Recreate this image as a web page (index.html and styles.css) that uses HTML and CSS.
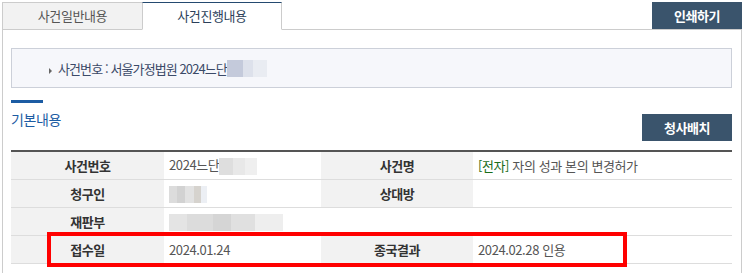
FILE: index.html
```html
<!DOCTYPE html>
<html lang="ko">
<head>
    <meta charset="UTF-8">
    <title>사건진행내용</title>
    <link rel="stylesheet" href="styles.css">
</head>
<body>
    <div class="topbar">
        <div class="tabs">
            <div class="tab">사건일반내용</div>
            <div class="tab active">사건진행내용</div>
        </div>
        <button class="btn print">인쇄하기</button>
    </div>

    <div class="content">
        <div class="case-box">
            <span class="bullet"></span>
            <span>사건번호 : 서울가정법원 2024느단</span><span class="blur blur-blue"></span>
        </div>

        <div class="section-head">
            <h3 class="section-title">기본내용</h3>
            <button class="btn small">청사배치</button>
        </div>

        <div class="table-wrap">
            <table class="info">
                <colgroup>
                    <col class="c-th">
                    <col class="c-td">
                    <col class="c-th2">
                    <col>
                </colgroup>
                <tr>
                    <th>사건번호</th>
                    <td>2024느단<span class="blur blur-a"></span></td>
                    <th>사건명</th>
                    <td><span class="tag">[전자]</span> 자의 성과 본의 변경허가</td>
                </tr>
                <tr>
                    <th>청구인</th>
                    <td><span class="blur blur-b"></span></td>
                    <th>상대방</th>
                    <td></td>
                </tr>
                <tr>
                    <th>재판부</th>
                    <td colspan="3"><span class="blur blur-c"></span></td>
                </tr>
                <tr>
                    <th>접수일</th>
                    <td>2024.01.24</td>
                    <th>종국결과</th>
                    <td>2024.02.28 인용</td>
                </tr>
            </table>
            <div class="mark"></div>
        </div>
    </div>
</body>
</html>
```

FILE: styles.css
```css
* {
    box-sizing: border-box;
    margin: 0;
    padding: 0;
}
body {
    font-family: "Noto Sans CJK KR", "Noto Sans", sans-serif;
    font-size: 12px;
    color: #555;
    background: #fff;
    padding: 2px 3px 0 2px;
    letter-spacing: -0.4px;
}
.topbar {
    display: flex;
    justify-content: space-between;
    align-items: flex-start;
}
.tabs {
    display: flex;
}
.tab {
    width: 140px;
    height: 28px;
    line-height: 26px;
    text-align: center;
    font-size: 13px;
    color: #555;
    background: #f2f2f2;
    border: 1px solid #ccc;
    border-right: none;
}
.tab.active {
    background: #fff;
    color: #2b3f5a;
    border-top: 1px solid #244a70;
    border-right: 1px solid #ccc;
    border-bottom: 1px solid #fff;
}
.btn {
    font-family: inherit;
    letter-spacing: -0.4px;
    background: #3a546c;
    color: #fff;
    border: none;
    font-size: 13px;
    font-weight: bold;
    width: 90px;
    height: 27px;
}
.content {
    border: 1px solid #ccc;
    margin-top: -1px;
    padding: 18px 9px 20px 8px;
}
.case-box {
    height: 40px;
    background: #f6f7fb;
    border: 1px solid #ccd0d9;
    display: flex;
    align-items: center;
    padding-left: 37px;
    font-size: 13px;
    letter-spacing: -0.9px;
    color: #3b4a68;
}
.bullet {
    width: 0;
    height: 0;
    border-left: 3px solid #666;
    border-top: 3px solid transparent;
    border-bottom: 3px solid transparent;
    margin: 6px 6px 0 0;
}
.blur {
    display: inline-block;
    height: 17px;
    vertical-align: middle;
}
.blur-blue {
    width: 40px;
    background: linear-gradient(to right, #c4cadb 0 16px, #dde1eb 16px 26px, #e9ecf2 26px);
}
.blur-a {
    width: 38px;
    background: linear-gradient(to right, #dedede 0 14px, #e8e8e8 14px 26px, #efefef 26px);
}
.blur-b {
    width: 38px;
    background: linear-gradient(to right, #dcdcdc 0 8px, #d2d2d2 8px 16px, #e2e2e2 16px 25px, #d6d3ce 25px 32px, #eceff4 32px);
}
.blur-c {
    width: 114px;
    background: linear-gradient(to right, #e4e4e4 0 18px, #dcdcdc 18px 44px, #d5d5d5 44px 62px, #e0e0e0 62px 86px, #eeeeee 86px);
}
.section-head {
    display: flex;
    justify-content: space-between;
    align-items: flex-end;
    margin-top: 12px;
}
.section-title {
    font-size: 14px;
    font-weight: normal;
    color: #1c5ca3;
    padding-top: 9px;
    line-height: 20px;
    margin-bottom: 12px;
    position: relative;
}
.section-title::before {
    content: "";
    position: absolute;
    left: 0;
    top: 0;
    width: 32px;
    height: 3px;
    background: #1c5ca3;
}
.table-wrap {
    position: relative;
    margin-top: 9px;
}
.info {
    width: 100%;
    border-collapse: collapse;
    border-top: 2px solid #555;
    table-layout: fixed;
}
.c-th {
    width: 153px;
}
.c-td {
    width: 157px;
}
.c-th2 {
    width: 152px;
}
.info th, .info td {
    height: 28px;
    border-bottom: 1px solid #ddd;
    font-size: 13px;
}
.info th {
    background: #f2f2f2;
    color: #333;
    font-weight: bold;
}
.info td {
    padding-left: 5px;
    color: #555;
}
.tag {
    color: #1a6e1a;
}
.mark {
    position: absolute;
    left: 36px;
    top: 82px;
    width: 580px;
    height: 35px;
    border: 4px solid #f00;
}
```
